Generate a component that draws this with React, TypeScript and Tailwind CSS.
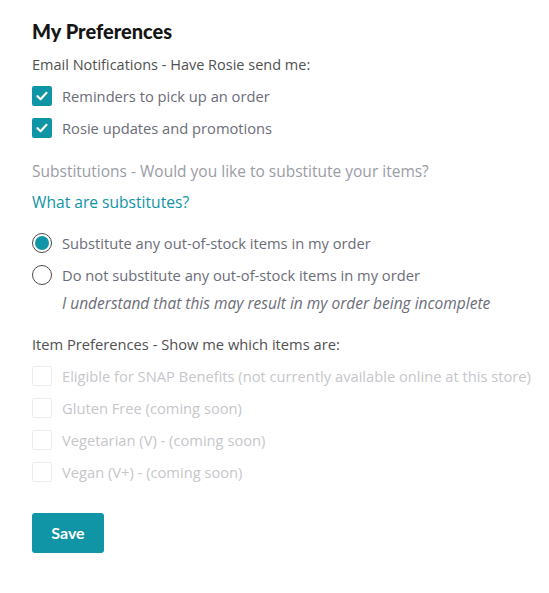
import React from "react";

const teal = "bg-[#0f95a6]";

function CheckedBox() {
  return (
    <span className={`flex h-5 w-5 shrink-0 items-center justify-center rounded-[2px] ${teal}`}>
      <svg width="14" height="14" viewBox="0 0 14 14" fill="none">
        <path d="M2.5 7.2 L5.6 10.2 L11.5 3.8" stroke="white" strokeWidth="2.2" strokeLinecap="round" strokeLinejoin="round" />
      </svg>
    </span>
  );
}

function EmptyBox() {
  return <span className="h-5 w-5 shrink-0 rounded-[2px] border border-[#ececec] bg-white" />;
}

function Radio({ checked }: { checked?: boolean }) {
  return (
    <span className="flex h-5 w-5 shrink-0 items-center justify-center rounded-full border-[1.5px] border-[#4a4a4a] bg-white">
      {checked && <span className="h-[14px] w-[14px] rounded-full bg-[#0f95a6]" />}
    </span>
  );
}

export default function App() {
  return (
    <div className="min-h-[593px] bg-white px-8 pt-[18px] font-['Open_Sans',sans-serif] text-[14.7px] text-[#6b6d79]">
      <h1 className="font-['Lato',sans-serif] text-[20px] font-black leading-[26px] text-[#151515]">My Preferences</h1>
      <p className="mt-[11px] text-[14.5px] leading-[20px] text-[#505050]">Email Notifications - Have Rosie send me:</p>
      <div className="mt-[11px] flex flex-col gap-3">
        <label className="flex items-center gap-[10px] leading-[20px]">
          <CheckedBox />
          <span>Reminders to pick up an order</span>
        </label>
        <label className="flex items-center gap-[10px] leading-[20px]">
          <CheckedBox />
          <span>Rosie updates and promotions</span>
        </label>
      </div>
      <p className="mt-[23px] text-[15.5px] leading-[20px] text-[#9a9ca6]">Substitutions - Would you like to substitute your items?</p>
      <p className="mt-[11px] text-[15.6px] leading-[20px] text-[#0f95a6]">What are substitutes?</p>
      <div className="mt-[21px] flex flex-col gap-3">
        <label className="flex items-center gap-[10px] leading-[20px]">
          <Radio checked />
          <span>Substitute any out-of-stock items in my order</span>
        </label>
        <label className="flex items-center gap-[10px] leading-[20px]">
          <Radio />
          <span>Do not substitute any out-of-stock items in my order</span>
        </label>
      </div>
      <p className="mt-[8px] pl-[30px] text-[15.5px] italic leading-[20px] text-[#6b6d79]">
        I understand that this may result in my order being incomplete
      </p>
      <p className="mt-[21px] leading-[20px] text-[#505050]">Item Preferences - Show me which items are:</p>
      <div className="mt-[12px] flex flex-col gap-3 text-[#c6c6cb]">
        {[
          "Eligible for SNAP Benefits (not currently available online at this store)",
          "Gluten Free (coming soon)",
          "Vegetarian (V) - (coming soon)",
          "Vegan (V+) - (coming soon)",
        ].map((t) => (
          <label key={t} className="flex items-center gap-[10px] whitespace-nowrap leading-[20px]">
            <EmptyBox />
            <span>{t}</span>
          </label>
        ))}
      </div>
      <button className={`mt-[31px] h-[40px] w-[72px] rounded-[3px] ${teal} font-['Lato',sans-serif] text-[16px] font-bold text-white`}>
        Save
      </button>
    </div>
  );
}
